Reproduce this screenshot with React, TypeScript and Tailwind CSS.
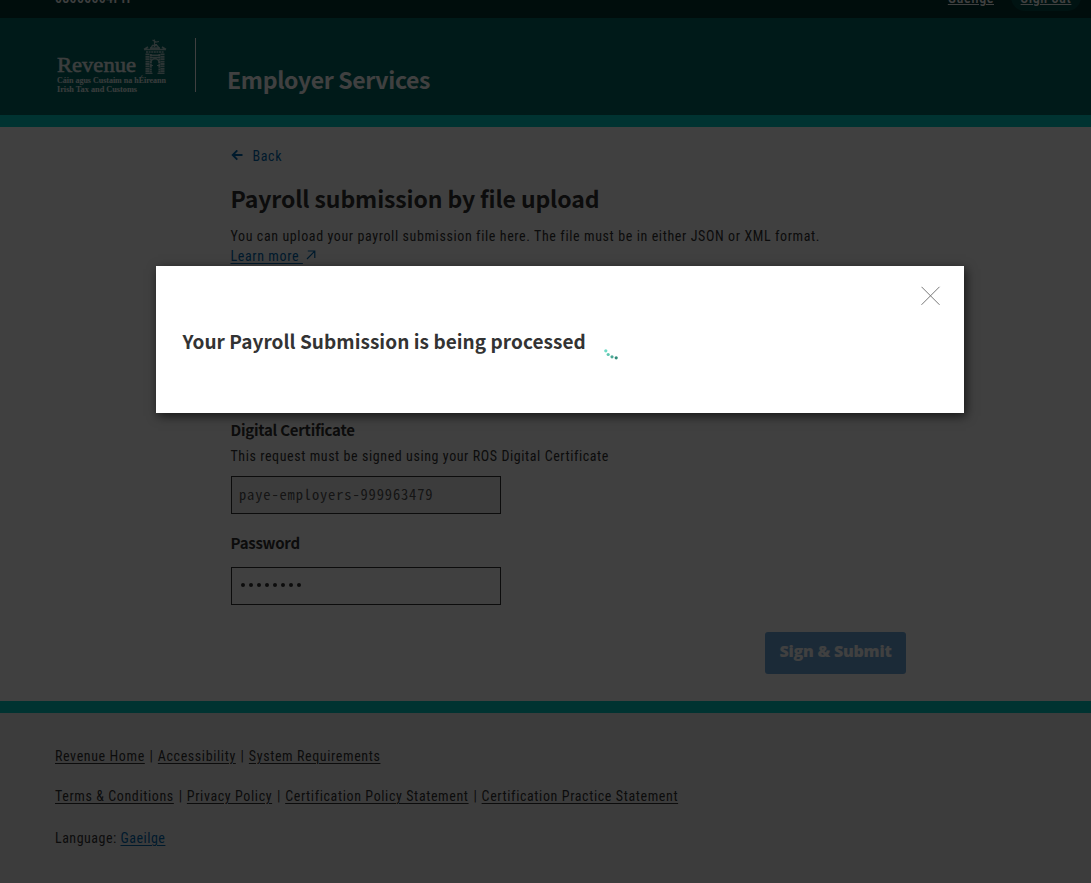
import type { ReactNode } from "react";

const dots = Array.from({ length: 8 }, (_, i) => i);

function RevenueLogo() {
  return (
    <svg width="112" height="56" viewBox="0 0 112 56" className="block text-white/90">
      <text x="1" y="34" textLength="79" lengthAdjust="spacingAndGlyphs" fill="currentColor" stroke="currentColor" strokeWidth=".5" className="font-['Liberation_Serif',serif] text-[22px] tracking-normal">Revenue</text>
      <text x="1" y="45" textLength="109" lengthAdjust="spacingAndGlyphs" fill="currentColor" className="font-['Liberation_Serif',serif] text-[8.500px] font-bold tracking-normal">Cáin agus Custaim na hÉireann</text>
      <text x="1" y="54" textLength="80" lengthAdjust="spacingAndGlyphs" fill="currentColor" className="font-['Liberation_Serif',serif] text-[8.500px] font-bold tracking-normal">Irish Tax and Customs</text>
      <g stroke="currentColor" fill="none" opacity=".75">
        <path d="M98.500 9V1.500M96.500 2l3.500 2 3-.5M98 6.500l3 0" strokeWidth="1.200" />
        <path d="M95 10l1.500-2.500h4.500L103 10" strokeWidth="1.400" />
        <path d="M88 11.500l4-2.500M110 11.500l-4-2.500M88 11.500h22M94 10h10" strokeWidth="1.600" />
        <path d="M90 14h18" strokeWidth="1.400" strokeDasharray="2 .6" />
        <path d="M91.500 15.500v19.500M106.500 15.500v19.500" strokeWidth="4" strokeDasharray="1.800 .6" />
        <path d="M94.800 16v19M103.400 16v19" strokeWidth="2" strokeDasharray="1.800 .6" />
        <path d="M94 17.200h10M94 19.500h10" strokeWidth="1.400" />
        <path d="M94.700 25a4.300 4.300 0 1 1 8.600 0" strokeWidth="1.400" />
        <path d="M94 27.500h3M101 27.500h3" strokeWidth="1.200" />
        <path d="M89.500 35.300h7M101.500 35.300h7" strokeWidth="1.200" />
      </g>
    </svg>
  );
}

function FooterLink({ children }: { children: ReactNode }) {
  return <a href="#" className="underline decoration-1 underline-offset-2">{children}</a>;
}

function Sep() {
  return <span className="w-[13px] text-center tracking-normal">|</span>;
}

export default function App() {
  return (
    <div className="relative h-[883px] w-[1091px] overflow-hidden bg-white font-['Roboto','Open_Sans',sans-serif] text-sm leading-5 tracking-[0.61px] text-[#333] [font-stretch:85%]">
      <div className="flex h-full flex-col">
        <div className="flex h-[18px] items-end justify-between bg-[#003432] pl-[55px] pr-[10px] pb-[7px] font-medium text-white">
          <span className="mb-[3px] w-[76px] whitespace-nowrap tracking-[0.3px]">08000004PH</span>
          <span className="flex items-end">
            <a href="#" className="mb-[3px] mr-[17px] underline decoration-1 underline-offset-1">Gaeilge</a>
            <a href="#" className="h-7 w-[70px] rounded-full bg-[#004c48] pt-[5px] text-center underline decoration-1 underline-offset-1">Sign out</a>
          </span>
        </div>
        <header className="flex h-[97px] items-start bg-[#006864] pl-14 pt-5 text-white">
          <RevenueLogo />
          <div className="ml-[27px] h-[54px] w-px bg-white" />
          <div className="ml-[31px] pt-[25px] font-['Noto_Sans_CJK_SC',sans-serif] text-[23px] leading-8 font-bold tracking-[-0.33px]">Employer Services</div>
        </header>
        <div className="h-3 bg-[#00ccc4]" />
        <main className="flex h-[574px] w-[906px] flex-col pl-[230.500px] pt-[19px]">
          <a href="#" className="flex items-center text-[#0068b0]">
            <svg width="12" height="12" viewBox="0 0 12 12" className="mr-[9.500px] ml-[0.500px]" fill="none" stroke="currentColor" strokeWidth="1.900">
              <path d="M11.500 5H2M6.300.400 1.700 5l4.600 4.600" />
            </svg>
            Back
          </a>
          <h1 className="mt-4 mb-0.5 font-['Noto_Sans_CJK_SC',sans-serif] text-[23px] leading-8 font-bold tracking-[-0.12px]">Payroll submission by file upload</h1>
          <p className="mt-[10px] whitespace-nowrap">You can upload your payroll submission file here. The file must be in either JSON or XML format.</p>
          <a href="#" className="flex items-center text-[#0068b0]">
            <span className="whitespace-pre underline decoration-1 underline-offset-2">Learn more </span>
            <svg width="10" height="10" viewBox="0 0 10 10" className="mb-0.5 ml-[3px]" fill="none" stroke="currentColor" strokeWidth="1.200">
              <path d="M1 9 8.700 1.200M1.800 1h7v7" />
            </svg>
          </a>
          <h2 className="mt-[154px] mb-px font-['Noto_Sans_CJK_SC',sans-serif] text-[15px] leading-5 font-bold tracking-[-0.25px]">Digital Certificate</h2>
          <p className="mt-[5px] tracking-[0.58px]">This request must be signed using your ROS Digital Certificate</p>
          <div className="mt-[10px] ml-[0.500px] flex h-[38px] w-[270px] items-center border border-[#333] bg-[#f0f0f0] pl-[7px] pb-[3px] font-['Noto_Sans_Mono_CJK_SC',monospace] text-[14.500px] tracking-[0.85px] text-[#555]">paye-employers-999963479</div>
          <h2 className="mt-[19px] font-['Noto_Sans_CJK_SC',sans-serif] text-[15px] leading-5 font-bold tracking-[-0.25px]">Password</h2>
          <div className="mt-[14px] ml-[0.500px] flex h-[38px] w-[270px] items-center gap-1 border border-[#333] pl-[9px] pb-0.5">
            {dots.map((i) => (
              <span key={i} className="size-1 rounded-full bg-[#333]" />
            ))}
          </div>
          <button className="mt-[27px] h-[42px] w-[141px] self-end rounded-[3px] bg-[#6ca8dc] pb-[5px] font-['Open_Sans',sans-serif] text-base font-extrabold tracking-[-0.2px] text-white [font-stretch:100%]">Sign &amp; Submit</button>
        </main>
        <div className="h-3 bg-[#00ccc4]" />
        <footer className="h-[170px] bg-[#f0f0f0] pl-[55px] pt-[33px]">
          <div className="flex"><FooterLink>Revenue Home</FooterLink><Sep /><FooterLink>Accessibility</FooterLink><Sep /><FooterLink>System Requirements</FooterLink></div>
          <div className="mt-5 flex"><FooterLink>Terms &amp; Conditions</FooterLink><Sep /><FooterLink>Privacy Policy</FooterLink><Sep /><FooterLink>Certification Policy Statement</FooterLink><Sep /><FooterLink>Certification Practice Statement</FooterLink></div>
          <div className="mt-[22px] tracking-[0.5px]">Language: <a href="#" className="text-[#0068b0] underline decoration-1 underline-offset-2">Gaeilge</a></div>
        </footer>
      </div>
      <div className="absolute inset-0 bg-black/75 pl-[156px] pt-[266px]">
        <div role="dialog" className="flex h-[147px] w-[808px] justify-between bg-white pl-[26.500px] pr-[23px] shadow-[2px_3px_10px_rgba(0,0,0,0.65)]">
          <div className="flex pt-[61px]">
            <h2 className="w-[404px] font-['Noto_Sans_CJK_SC',sans-serif] text-[19px] leading-7 font-bold whitespace-nowrap tracking-[0.05px]">Your Payroll Submission is being processed</h2>
            <svg width="16" height="16" viewBox="0 0 16 16" className="ml-[16.500px] mt-[19px]">
              <circle cx="2.800" cy="4.800" r="1.600" fill="#6fdcc6" />
              <circle cx="5.200" cy="8.500" r="1.600" fill="#60c6b1" />
              <circle cx="9" cy="10.800" r="1.600" fill="#4aa895" />
              <circle cx="13.200" cy="11.800" r="1.600" fill="#328b79" />
            </svg>
          </div>
          <svg width="20" height="20" viewBox="0 0 20 20" className="mt-5" fill="none" stroke="#777" strokeWidth="1">
            <path d="M.500 .8 18.500 18.800M18.500 .8 .5 18.800" />
          </svg>
        </div>
      </div>
    </div>
  );
}
